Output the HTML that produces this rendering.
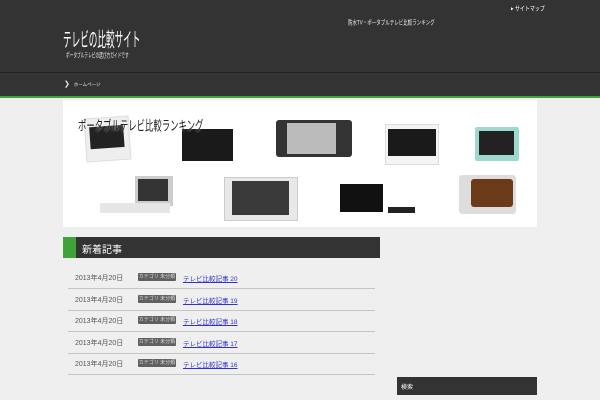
<html><head><style>
body{margin:0;width:600px;height:400px;overflow:hidden;background:#efefef;font-family:"Liberation Sans","Noto Sans CJK JP",sans-serif;position:relative}
.a{position:absolute}
.row{position:absolute;left:68px;width:307px;height:21px;border-bottom:1px solid #c4c4c4;font-size:7px;color:#555}
.row span{position:absolute;top:6px;white-space:nowrap}
.tag{left:70px;width:38px;height:8px;background:#606060;color:#ddd;font-size:5px;text-align:center;line-height:8px;top:6px!important;border-radius:1px}
.lk{left:115px;color:#33c;text-decoration:underline;font-size:6.5px}
.s{transform-origin:0 0;white-space:nowrap}
</style></head><body>
<div class="a" style="left:0;top:0;width:600px;height:72px;background:#333"></div>
<div class="a" style="left:0;top:72px;width:600px;height:1px;background:#222"></div>
<div class="a" style="left:0;top:73px;width:600px;height:23px;background:#333"></div>
<div class="a" style="left:0;top:96px;width:600px;height:2px;background:#3fa33a"></div>
<div class="a s" style="left:63px;top:26px;color:#fff;font-size:8.6px;transform:scale(1,2.3)">テレビの比較サイト</div>
<div class="a s" style="left:66px;top:52px;color:#eee;font-size:3.7px;transform:scale(1,1.8)">ポータブルテレビの選び方ガイドです</div>
<div class="a s" style="left:348px;top:19px;color:#eee;font-size:4.5px;transform:scale(1,1.4)">防水TV・ポータブルテレビ比較ランキング</div>
<div class="a s" style="left:511px;top:4px;color:#fff;font-size:5px;transform:scale(1,1.3)">▸ サイトマップ</div>
<div class="a" style="left:64px;top:80px;color:#eee;font-size:7px">❯&nbsp;&nbsp;<span style="font-size:4.5px">ホームページ</span></div>
<div class="a" style="left:63px;top:100px;width:474px;height:127px;background:#fff"></div>
<div class="a" style="left:85px;top:117px;width:43px;height:42px;background:#eee;border:1px solid #ddd;transform:rotate(-4deg)"><div class="a" style="left:4px;top:8px;width:34px;height:22px;background:#222"></div></div>
<div class="a" style="left:182px;top:129px;width:51px;height:32px;background:#1a1a1a"></div>
<div class="a" style="left:276px;top:120px;width:76px;height:37px;background:#333;border-radius:3px"><div class="a" style="left:11px;top:3px;width:49px;height:31px;background:#bbb"></div></div>
<div class="a" style="left:385px;top:124px;width:52px;height:39px;background:#f4f4f4;border:1px solid #ddd"><div class="a" style="left:2px;top:4px;width:48px;height:27px;background:#1a1a1a"></div></div>
<div class="a" style="left:475px;top:127px;width:44px;height:34px;background:#9dd9cf;border-radius:2px"><div class="a" style="left:4px;top:4px;width:35px;height:24px;background:#222"></div></div>
<div class="a" style="left:135px;top:176px;width:38px;height:30px;background:#ccc"><div class="a" style="left:3px;top:3px;width:30px;height:22px;background:#333"></div></div>
<div class="a" style="left:100px;top:203px;width:70px;height:10px;background:#e6e6e6"></div>
<div class="a" style="left:224px;top:177px;width:72px;height:42px;background:#e8e8e8;border:1px solid #ccc"><div class="a" style="left:7px;top:3px;width:57px;height:34px;background:#3a3a3a"></div></div>
<div class="a" style="left:340px;top:184px;width:43px;height:28px;background:#111"></div>
<div class="a" style="left:388px;top:207px;width:27px;height:6px;background:#222"></div>
<div class="a" style="left:459px;top:175px;width:57px;height:39px;background:#ddd;border-radius:3px"><div class="a" style="left:12px;top:4px;width:42px;height:28px;background:#6b3a1a;border-radius:3px"></div></div>
<div class="a s" style="left:78px;top:116px;color:#222;font-size:8.4px;transform:scale(1,1.6);text-shadow:0 0 2px #fff">ポータブルテレビ比較ランキング</div>
<div class="a" style="left:63px;top:237px;width:317px;height:21px;background:#333"></div>
<div class="a" style="left:63px;top:237px;width:13px;height:21px;background:#3fa33a"></div>
<div class="a" style="left:82px;top:241px;color:#fff;font-size:10px">新着記事</div>
<div class="row" style="top:267px"><span style="left:7px">2013年4月20日</span><span class="tag">カテゴリ 未分類</span><span class="lk">テレビ比較記事 20</span></div>
<div class="row" style="top:289px"><span style="left:7px">2013年4月20日</span><span class="tag">カテゴリ 未分類</span><span class="lk">テレビ比較記事 19</span></div>
<div class="row" style="top:310px"><span style="left:7px">2013年4月20日</span><span class="tag">カテゴリ 未分類</span><span class="lk">テレビ比較記事 18</span></div>
<div class="row" style="top:332px"><span style="left:7px">2013年4月20日</span><span class="tag">カテゴリ 未分類</span><span class="lk">テレビ比較記事 17</span></div>
<div class="row" style="top:353px"><span style="left:7px">2013年4月20日</span><span class="tag">カテゴリ 未分類</span><span class="lk">テレビ比較記事 16</span></div>
<div class="a" style="left:397px;top:377px;width:140px;height:18px;background:#333"></div>
<div class="a" style="left:401px;top:382px;color:#fff;font-size:6px">検索</div>
</body></html>
